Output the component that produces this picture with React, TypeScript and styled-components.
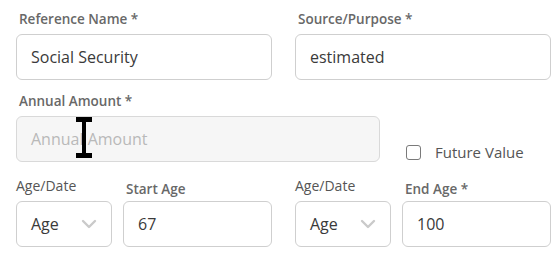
import React from 'react';
import styled, { createGlobalStyle } from 'styled-components';

const GlobalStyle = createGlobalStyle`
  html, body {
    margin: 0;
    padding: 0;
    background: #ffffff;
  }
  body {
    font-family: 'Open Sans', 'Liberation Sans', sans-serif;
    color: #333;
  }
`;

const Form = styled.div`
  width: 560px;
  height: 256px;
  box-sizing: border-box;
  padding: 10px 9px 0 16px;
  display: flex;
  flex-direction: column;
  gap: 12px;
`;

const Row = styled.div<{ align?: string; push?: number }>`
  display: flex;
  gap: 23px;
  align-items: ${(p) => p.align || 'flex-start'};
  margin-top: ${(p) => p.push ?? 0}px;
`;

const Field = styled.div<{ width: number }>`
  display: flex;
  flex-direction: column;
  width: ${(p) => p.width}px;
  position: relative;
`;

const Label = styled.label<{ indent?: number; drop?: number; plain?: boolean }>`
  display: block;
  font-size: ${(p) => (p.plain ? 14 : 13.5)}px;
  line-height: 18px;
  font-weight: ${(p) => (p.plain ? 400 : 600)};
  color: ${(p) => (p.plain ? '#555' : '#686868')};
  padding-left: ${(p) => p.indent ?? 3}px;
  padding-top: ${(p) => p.drop ?? 0}px;
  margin-bottom: ${(p) => 6 - (p.drop ?? 0)}px;
  white-space: nowrap;
`;

const Input = styled.div<{ disabled?: boolean }>`
  box-sizing: border-box;
  height: 46px;
  border: 1px solid ${(p) => (p.disabled ? '#d9d9d9' : '#cfcfcf')};
  border-radius: 6px;
  background: ${(p) => (p.disabled ? '#f6f6f6' : '#ffffff')};
  padding: 0 14px;
  display: flex;
  align-items: center;
  font-size: 16px;
  color: ${(p) => (p.disabled ? '#b9b9b9' : '#3a3a3a')};
  position: relative;
`;

const Select = styled(Input)`
  justify-content: space-between;
  padding-right: 14px;
`;

const Pair = styled.div`
  display: flex;
  gap: 11px;
  width: 256px;
`;

const CheckWrap = styled.div`
  display: flex;
  align-items: center;
  gap: 14px;
  margin-left: 3px;
  height: 20px;
  font-size: 15px;
  color: #555;
`;

const Box = styled.span`
  width: 15px;
  height: 15px;
  box-sizing: border-box;
  border: 1.5px solid #7a7a7a;
  border-radius: 3px;
  display: inline-block;
`;

const Cursor = styled.svg`
  position: absolute;
  left: 58px;
  top: 0px;
`;

const Chevron = () => (
  <svg width="16" height="10" viewBox="0 0 16 10">
    <path d="M2 2 L8 8 L14 2" fill="none" stroke="#cacaca" strokeWidth="2.4" strokeLinecap="round" strokeLinejoin="round" />
  </svg>
);

export default function App() {
  return (
    <>
      <GlobalStyle />
      <Form>
        <Row>
          <Field width={256}>
            <Label>Reference Name *</Label>
            <Input>Social Security</Input>
          </Field>
          <Field width={256}>
            <Label>Source/Purpose *</Label>
            <Input>estimated</Input>
          </Field>
        </Row>
        <Row align="flex-end">
          <Field width={364}>
            <Label>Annual Amount *</Label>
            <Input disabled>
              Annual Amount
              <Cursor width="18" height="42" viewBox="0 0 18 42">
                <rect x="1" y="0" width="16" height="5" fill="#000" />
                <rect x="7" y="0" width="4" height="41" fill="#000" />
                <rect x="1" y="36" width="16" height="5" fill="#000" />
              </Cursor>
            </Input>
          </Field>
          <CheckWrap>
            <Box />
            Future Value
          </CheckWrap>
        </Row>
        <Row push={3}>
          <Pair>
            <Field width={96}>
              <Label indent={0} plain>Age/Date</Label>
              <Select>
                Age
                <Chevron />
              </Select>
            </Field>
            <Field width={149}>
              <Label drop={3}>Start Age</Label>
              <Input>67</Input>
            </Field>
          </Pair>
          <Pair>
            <Field width={96}>
              <Label indent={0} plain>Age/Date</Label>
              <Select>
                Age
                <Chevron />
              </Select>
            </Field>
            <Field width={149}>
              <Label drop={3}>End Age *</Label>
              <Input>100</Input>
            </Field>
          </Pair>
        </Row>
      </Form>
    </>
  );
}
